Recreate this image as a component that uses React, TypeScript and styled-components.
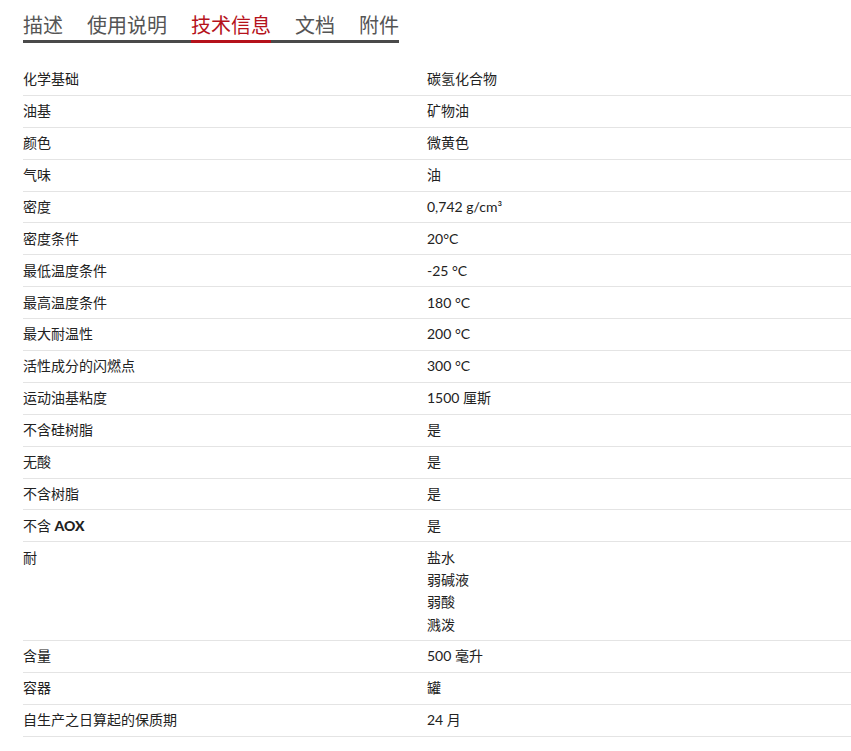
import React from "react";
import styled, { createGlobalStyle } from "styled-components";

const Global = createGlobalStyle`
  body {
    margin: 0;
    background: #fff;
    font-family: "Lato", "Noto Sans CJK SC", sans-serif;
    color: #222;
  }
`;

const tabs = ["描述", "使用说明", "技术信息", "文档", "附件"];

const rows: [React.ReactNode, string[]][] = [
  ["化学基础", ["碳氢化合物"]],
  ["油基", ["矿物油"]],
  ["颜色", ["微黄色"]],
  ["气味", ["油"]],
  ["密度", ["0,742 g/cm³"]],
  ["密度条件", ["20°C"]],
  ["最低温度条件", ["-25 °C"]],
  ["最高温度条件", ["180 °C"]],
  ["最大耐温性", ["200 °C"]],
  ["活性成分的闪燃点", ["300 °C"]],
  ["运动油基粘度", ["1500 厘斯"]],
  ["不含硅树脂", ["是"]],
  ["无酸", ["是"]],
  ["不含树脂", ["是"]],
  [<>不含 <b>AOX</b></>, ["是"]],
  ["耐", ["盐水", "弱碱液", "弱酸", "溅泼"]],
  ["含量", ["500 毫升"]],
  ["容器", ["罐"]],
  ["自生产之日算起的保质期", ["24 月"]],
];

export default function App() {
  return (
    <Page>
      <Global />
      <TabBar>
        {tabs.map((t) => (
          <Tab key={t} $active={t === "技术信息"}>{t}</Tab>
        ))}
      </TabBar>
      <Table>
        {rows.map(([k, v], i) => (
          <Row key={i}>
            <Cell>{k}</Cell>
            <Cell>
              {v.map((line) => (
                <Line key={line}>{line}</Line>
              ))}
            </Cell>
          </Row>
        ))}
      </Table>
    </Page>
  );
}

const Page = styled.div`
  padding: 10px 0 0 23px;
`;

const TabBar = styled.div`
  display: inline-flex;
  gap: 24px;
  border-bottom: 3px solid #4a4a4a;
`;

const Tab = styled.div<{ $active?: boolean }>`
  font-family: "Noto Sans CJK SC", sans-serif;
  font-size: 20px;
  line-height: 30px;
  color: ${(p) => (p.$active ? "#b5121b" : "#555")};
  margin-bottom: -3px;
  border-bottom: 3px solid ${(p) => (p.$active ? "#b5121b" : "transparent")};
`;

const Table = styled.div`
  margin-top: 21px;
`;

const Row = styled.div`
  display: grid;
  grid-template-columns: 404px 1fr;
  border-bottom: 1px solid #e4e4e4;
  padding: 4.3px 0;
`;

const Cell = styled.div`
  font-size: 14px;
  line-height: 22px;
  color: #222;
  b {
    font-weight: 900;
  }
`;

const Line = styled.div`
  height: 22.3px;
  line-height: 22px;
`;
